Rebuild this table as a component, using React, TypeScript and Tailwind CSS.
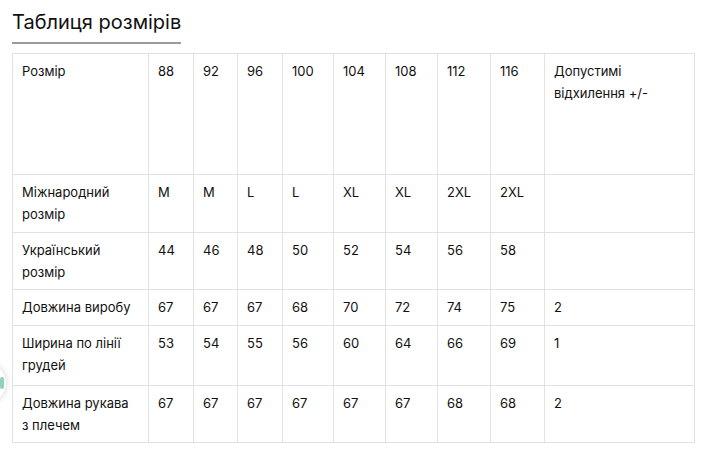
import React from "react";

type Row = { label: string; values: string[]; tol: string; h: string };

const sizes = ["88", "92", "96", "100", "104", "108", "112", "116"];

const rows: Row[] = [
  { label: "Міжнародний розмір", values: ["M", "M", "L", "L", "XL", "XL", "2XL", "2XL"], tol: "", h: "h-[58px]" },
  { label: "Український розмір", values: ["44", "46", "48", "50", "52", "54", "56", "58"], tol: "", h: "h-[57px]" },
  { label: "Довжина виробу", values: ["67", "67", "67", "68", "70", "72", "74", "75"], tol: "2", h: "h-[36px]" },
  { label: "Ширина по лінії грудей", values: ["53", "54", "55", "56", "60", "64", "66", "69"], tol: "1", h: "h-[60px]" },
  { label: "Довжина рукава з плечем", values: ["67", "67", "67", "67", "67", "67", "68", "68"], tol: "2", h: "h-[57px]" },
];

const colWidths = ["w-[136px]", "w-[45px]", "w-[44px]", "w-[45px]", "w-[51px]", "w-[52px]", "w-[52px]", "w-[53px]", "w-[54px]", "w-[150px]"];

const cell = "border border-[#e1e1e1] align-top pt-[6px] pb-[6px] pl-[9px] pr-[12px] text-left font-normal";

export default function App() {
  return (
    <div className="relative w-[720px] h-[468px] bg-white overflow-hidden font-['Inter','Noto_Sans',sans-serif] text-[#111]">
      {/* floating button, mostly off screen */}
      <div className="absolute left-[-34px] top-[363px] w-10 h-10 rounded-full bg-white shadow-[0_0_6px_rgba(0,0,0,0.18)] flex items-center justify-end pr-[2px]">
        <div className="w-[4px] h-[12px] rounded-full bg-[#8fd4b4]" />
      </div>

      <div className="pl-3 pt-[8px]">
        <h2 className="text-[20px] leading-[28px] font-normal">Таблиця розмірів</h2>
        <div className="mt-[6px] w-[169px] h-[2px] bg-[#9a9a9a]" />

        <table className="mt-[9px] w-[682px] table-fixed border-collapse text-[13px] leading-[22px]">
          <colgroup>
            {colWidths.map((w, i) => (
              <col key={i} className={w} />
            ))}
          </colgroup>
          <tbody>
            <tr className="h-[121px]">
              <td className={cell}>Розмір</td>
              {sizes.map((s) => (
                <td key={s} className={cell}>
                  {s}
                </td>
              ))}
              <td className={cell}>Допустимі відхилення +/-</td>
            </tr>
            {rows.map((r) => (
              <tr key={r.label} className={r.h}>
                <td className={cell}>{r.label}</td>
                {r.values.map((v, i) => (
                  <td key={i} className={cell}>
                    {v}
                  </td>
                ))}
                <td className={cell}>{r.tol}</td>
              </tr>
            ))}
          </tbody>
        </table>
      </div>
    </div>
  );
}
